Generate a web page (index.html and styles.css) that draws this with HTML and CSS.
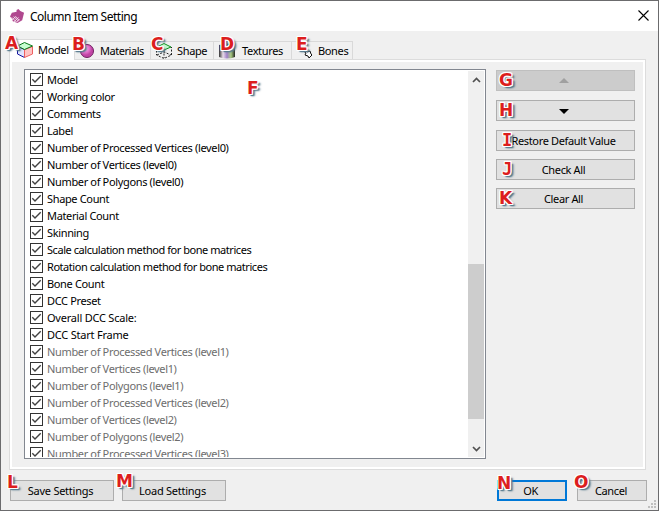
FILE: index.html
```html
<!DOCTYPE html>
<html lang="en">
<head>
<meta charset="utf-8">
<title>Column Item Setting</title>
<link rel="stylesheet" href="styles.css">
</head>
<body>
<svg width="0" height="0" class="defs">
  <symbol id="check" viewBox="0 0 11 11"><path d="M1.300 5.300 4 8 9.700 2.300" fill="none" stroke="#404040" stroke-width="1.400"/></symbol>
</svg>
<main class="window">
  <header class="titlebar">
    <svg class="logo" width="15" height="15" viewBox="0 0 16 16"><path d="M7 1 9 0 11 2 15 4 14 8 13 12 8 15 3 13 2 10 0 8 2 4 7 3Z" fill="#b0488f"/><path d="m2 9 5 5m-3-6 5 5m-3-5 4 4M2 12l4-4m-2 6 5-5m-2 5 3-3" stroke="#f8e8f3" stroke-width=".9"/></svg>
    <h1>Column Item Setting</h1>
    <svg class="close" width="11" height="11" viewBox="0 0 11 11"><path d="m.5.5 10 10m0-10-10 10" stroke="#000" stroke-width="1.100"/></svg>
  </header>
  <nav class="tabs">
    <div class="tab active model"><b class="mark a">A</b>
      <svg width="16" height="16" viewBox="0 0 16 16" stroke-linejoin="round"><path d="m.5 4.500 7 3v8l-7-3.500z" fill="#e0e5ff" stroke="#1414a0"/><path d="m7.500 7.500 8-3V12l-8 3.500z" fill="#ffc4c4" stroke="#ee6060"/><path d="m.5 4 7-3.500 8 3.500-8 3.500z" fill="#c8ffd2" stroke="#087818"/></svg><span>Model</span></div>
    <div class="tab materials"><b class="mark b">B</b>
      <svg width="16" height="16" viewBox="0 0 16 16"><defs><radialGradient id="ball" cx=".38" cy=".32"><stop stop-color="#ffd5f7"/><stop offset=".45" stop-color="#f080d8"/><stop offset="1" stop-color="#c044a4"/></radialGradient></defs><circle cx="7" cy="8" r="6.500" fill="url(#ball)" stroke="#702060"/></svg><span>Materials</span></div>
    <div class="tab shape"><b class="mark c">C</b>
      <svg width="16" height="16" viewBox="0 0 16 16" fill="none"><path d="M.5 4v8l7.500 3.500 7.500-3.500V4M8 7v8M1 12l7-3 7 3" stroke="#222" stroke-dasharray="2 1.500"/><path d="m1 4 7-3.500L15 4 8 7z" fill="#c0f5cc" stroke="#109020"/></svg><span>Shape</span></div>
    <div class="tab textures"><b class="mark d">D</b>
      <svg width="16" height="16" viewBox="0 0 16 16"><defs><linearGradient id="tex"><stop stop-color="#333"/><stop offset=".25" stop-color="#e8dce8"/><stop offset=".5" stop-color="#a080c8"/><stop offset=".75" stop-color="#a8cc80"/><stop offset="1" stop-color="#222"/></linearGradient></defs><path d="M0 2Q8-1 16 2v12Q8 17 0 14z" fill="url(#tex)"/><path d="M1 2Q8-1 15 2v4Q8 8 1 6z" fill="#26453a"/></svg><span>Textures</span></div>
    <div class="tab bones"><b class="mark e">E</b>
      <svg width="16" height="16" viewBox="0 0 16 16"><path d="M1 2h3l1 3 5 4 3-1 1 3 1 1-3 3-1-2-3-1 1-2-5-4-3-1z" fill="#fff" stroke="#111"/></svg><span>Bones</span></div>
  </nav>
  <section class="panel">
    <div class="listbox"><b class="mark f">F</b>
      <ul class="items">
        <li><svg><use href="#check"/></svg><span>Model</span></li>
        <li><svg><use href="#check"/></svg><span>Working color</span></li>
        <li><svg><use href="#check"/></svg><span>Comments</span></li>
        <li><svg><use href="#check"/></svg><span>Label</span></li>
        <li><svg><use href="#check"/></svg><span>Number of Processed Vertices (level0)</span></li>
        <li><svg><use href="#check"/></svg><span>Number of Vertices (level0)</span></li>
        <li><svg><use href="#check"/></svg><span>Number of Polygons (level0)</span></li>
        <li><svg><use href="#check"/></svg><span>Shape Count</span></li>
        <li><svg><use href="#check"/></svg><span>Material Count</span></li>
        <li><svg><use href="#check"/></svg><span>Skinning</span></li>
        <li class="long"><svg><use href="#check"/></svg><span>Scale calculation method for bone matrices</span></li>
        <li class="long"><svg><use href="#check"/></svg><span>Rotation calculation method for bone matrices</span></li>
        <li><svg><use href="#check"/></svg><span>Bone Count</span></li>
        <li><svg><use href="#check"/></svg><span>DCC Preset</span></li>
        <li class="loose"><svg><use href="#check"/></svg><span>Overall DCC Scale:</span></li>
        <li class="loose"><svg><use href="#check"/></svg><span>DCC Start Frame</span></li>
        <li class="dim"><svg><use href="#check"/></svg><span>Number of Processed Vertices (level1)</span></li>
        <li class="dim"><svg><use href="#check"/></svg><span>Number of Vertices (level1)</span></li>
        <li class="dim"><svg><use href="#check"/></svg><span>Number of Polygons (level1)</span></li>
        <li class="dim"><svg><use href="#check"/></svg><span>Number of Processed Vertices (level2)</span></li>
        <li class="dim"><svg><use href="#check"/></svg><span>Number of Vertices (level2)</span></li>
        <li class="dim"><svg><use href="#check"/></svg><span>Number of Polygons (level2)</span></li>
        <li class="dim"><svg><use href="#check"/></svg><span>Number of Processed Vertices (level3)</span></li>
      </ul>
      <div class="scrollbar">
        <svg width="9" height="6" viewBox="0 0 9 6"><path d="M1 5 4.500 1.500 8 5" fill="none" stroke="#505050" stroke-width="1.700"/></svg>
        <div class="thumb"></div>
        <svg width="9" height="6" viewBox="0 0 9 6"><path d="M1 1 4.500 4.500 8 1" fill="none" stroke="#505050" stroke-width="1.700"/></svg>
      </div>
    </div>
    <div class="actions">
      <div class="button disabled"><b class="mark">G</b><svg width="10" height="5"><path d="M0 5 5 0l5 5z" fill="#a0a0a0"/></svg></div>
      <div class="button down"><b class="mark">H</b><svg width="10" height="5"><path d="m0 0 5 5 5-5z" fill="#000"/></svg></div>
      <div class="button"><b class="mark mono">I</b><span>Restore Default Value</span></div>
      <div class="button"><b class="mark mono">J</b><span>Check All</span></div>
      <div class="button"><b class="mark">K</b><span>Clear All</span></div>
    </div>
  </section>
  <footer class="footer">
    <div class="button wide"><b class="mark l">L</b><span>Save Settings</span></div>
    <div class="button wide"><b class="mark m">M</b><span>Load Settings</span></div>
    <div class="button ok"><b class="mark n">N</b><span>OK</span></div>
    <div class="button cancel"><b class="mark o">O</b><span>Cancel</span></div>
    <svg class="grip" width="8" height="8" fill="#bfbfbf"><path d="M6 0h2v2H6zM3 3h2v2H3zM6 3h2v2H6zM0 6h2v2H0zM3 6h2v2H3zM6 6h2v2H6z"/></svg>
  </footer>
</main>
</body>
</html>
```
FILE: styles.css
```css
* { box-sizing: border-box; }
body { margin: 0; font: 11px/17px "Noto Sans", sans-serif; letter-spacing: -.35px; color: #000; }
svg { display: block; flex: none; }
.defs { position: absolute; }
.window { width: 659px; height: 511px; border: 1px solid #6b6b6d; background: #f0f0f0; display: flex; flex-direction: column; overflow: hidden; position: relative; }
.titlebar { height: 30px; background: #fff; display: flex; align-items: center; padding: 0 9px; flex: none; }
.logo { margin-right: 5px; }
.close { margin-top: -2px; }
h1 { font-size: 12px; font-weight: 400; letter-spacing: -.5px; margin: 0; flex: 1; white-space: nowrap; }
.tabs { display: flex; align-items: flex-end; height: 28px; padding-left: 8px; flex: none; }
.tab { position: relative; height: 18px; display: flex; align-items: center; gap: 5px; padding-left: 5px; border: 1px solid #d9d9d9; border-left: 0; border-bottom: 0; white-space: nowrap; }
.tab.active { height: 21px; background: #fff; border: 1px solid #dcdcdc; border-bottom: 0; margin-bottom: -1px; z-index: 1; padding-left: 7px; }
.active span { position: relative; top: -1px; }
.model { width: 66px; }
.tab.materials { width: 76px; gap: 4px; letter-spacing: -.45px; }
.shape { width: 63px; }
.textures { width: 78px; }
.tab.textures { gap: 7px; }
.bones { width: 61px; }
.panel { width: 637px; height: 411px; margin-left: 8px; border: 1px solid #dcdcdc; box-shadow: inset 0 0 0 2px #fff; display: flex; gap: 10px; padding: 9px 10px 0 14px; flex: none; }
.listbox { position: relative; width: 462px; height: 390px; border: 1px solid #828790; background: #fff; display: flex; padding: 1px; }
.items { flex: 1; list-style: none; margin: 0; padding: 0 0 0 4px; height: 386px; overflow: hidden; }
.items li { height: 17px; display: flex; align-items: center; gap: 4px; white-space: nowrap; }
.items .long { letter-spacing: -.45px; }
.items .loose { letter-spacing: -.22px; }
.items svg { width: 13px; height: 13px; border: 1px solid #333; }
.dim { color: #6d6d6d; }
.scrollbar { width: 16px; background: #f0f0f0; display: flex; flex-direction: column; align-items: center; padding: 6px 0 5px; }
.thumb { width: 16px; height: 155px; margin: auto 0 27px; background: #cdcdcd; }
.actions { width: 139px; padding-top: 1px; display: flex; flex-direction: column; gap: 8px; }
.button { position: relative; height: 21px; border: 1px solid #adadad; background: #e1e1e1; display: flex; align-items: center; justify-content: center; white-space: nowrap; flex: none; }
.actions .button:nth-child(-n+2) { margin-bottom: 1px; }
.actions .button svg { margin-right: 3px; }
.actions .down svg { margin-top: 2px; }
.actions span { margin-right: 4px; }
.disabled { background: #ccc; border-color: #bfbfbf; }
.footer { display: flex; padding: 10px 0 0 9px; gap: 8px; }
.wide { width: 104px; padding-right: 3px; letter-spacing: -.25px; }
.ok { width: 70px; border: 2px solid #0078d7; margin-left: 263px; padding-right: 3px; }
.cancel { width: 70px; margin-left: 2px; padding-right: 2px; }
.grip { position: absolute; right: 2px; bottom: 2px; }
.mark { position: absolute; left: 2px; top: 0; z-index: 2; font: bold 17px/19px "DejaVu Sans", sans-serif; letter-spacing: 0; color: #dc1e1e; text-shadow: 1px 0 #fff, -1px 0 #fff, 0 1px #fff, 0 -1px #fff, 1px 1px #fff, -1px -1px #fff, 1px -1px #fff, -1px 1px #fff, 2px 2px 1px #587b8e, 3px 2px 2px #587b8e; }
.mono { font-family: "DejaVu Sans Mono", monospace; left: 5px; }
.a { left: -5px; top: -6px; }
.b { left: -3px; top: -7px; }
.c { left: 0; top: -7px; }
.d { left: 6px; top: -7px; }
.e { left: 4px; top: -7px; }
.f { left: 222px; top: 9px; }
.l { left: -4px; top: -8px; }
.m { left: -7px; top: -9px; }
.n { left: -2px; top: -8px; }
.o { left: -4px; top: -8px; }
```
